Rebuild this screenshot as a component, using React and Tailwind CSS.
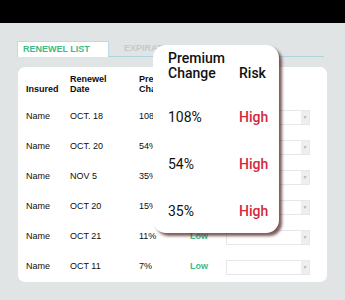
import React from "react";

const rows = [
  { name: "Name", date: "OCT. 18", change: "108%", risk: "High" },
  { name: "Name", date: "OCT. 20", change: "54%", risk: "High" },
  { name: "Name", date: "NOV 5", change: "35%", risk: "High" },
  { name: "Name", date: "OCT 20", change: "15%", risk: "Medium" },
  { name: "Name", date: "OCT 21", change: "11%", risk: "Low" },
  { name: "Name", date: "OCT 11", change: "7%", risk: "Low" },
];

const highlights = rows.filter((row) => row.risk === "High");

function RiskSelect() {
  return (
    <div className="flex h-[15px] w-[84px] border border-[#e6e7e8] bg-white">
      <div className="flex-1" />
      <div className="flex w-[8px] items-center justify-center bg-[#eeeeee] text-[5px] leading-none text-[#b3b3b3]">
        ▼
      </div>
    </div>
  );
}

export default function App() {
  return (
    <div className="relative h-[300px] w-[345px] overflow-hidden bg-[#e1e4e5] font-['Liberation_Sans',Arial,sans-serif] text-[#111]">
      <div className="h-[23px] bg-black" />

      <div className="mt-[18px] flex items-end pl-[17px] pr-[21px]">
        <div className="flex h-[16px] w-[92px] items-center border border-b-0 border-[#b9dde7] bg-white pl-[5px] text-[9px] font-bold text-[#3dbb88]">
          RENEWEL LIST
        </div>
        <div className="flex h-[16px] flex-1 items-center border-b border-[#acd3de] pl-[15px] text-[9px] font-bold text-[#c6c9cb]">
          EXPIRATION NOTIFICATION LIST
        </div>
      </div>

      <div className="mx-[18px] mt-[10px] h-[215px] rounded-[7px] bg-white pl-[8px] text-[#0d0d0d]">
        <div className="grid grid-cols-[44px_69px_51px_36px_84px] items-end pt-[7px] text-[9px] font-bold leading-[10px]">
          <div>Insured</div>
          <div>
            Renewel
            <br />
            Date
          </div>
          <div>
            Premium
            <br />
            Change
          </div>
          <div>Risk</div>
          <div />
        </div>
        <div className="mt-[8px]">
          {rows.map((row, i) => (
            <div
              key={i}
              className="grid h-[30px] grid-cols-[44px_69px_51px_36px_84px] items-center text-[9px]"
            >
              <div>{row.name}</div>
              <div>{row.date}</div>
              <div>{row.change}</div>
              <div
                className={
                  row.risk === "Low"
                    ? "font-bold text-[#3dbb88]"
                    : "font-bold text-[#d12a3a]"
                }
              >
                {row.risk}
              </div>
              <RiskSelect />
            </div>
          ))}
        </div>
      </div>

      <div className="absolute left-[153px] top-[45px] h-[188px] w-[126px] rounded-[13px] bg-white pl-[15px] pt-[6px] font-['Roboto',sans-serif] text-[14px] leading-[15px] text-[#111] shadow-[3px_3px_3px_rgba(80,35,35,0.75)]">
        <div className="grid grid-cols-[71px_1fr] items-end font-medium">
          <div>
            Premium
            <br />
            Change
          </div>
          <div>Risk</div>
        </div>
        <div className="mt-[13px]">
          {highlights.map((row, i) => (
            <div key={i} className="grid h-[47px] grid-cols-[71px_1fr] items-center">
              <div>{row.change}</div>
              <div className="font-medium text-[#d12a3a]">{row.risk}</div>
            </div>
          ))}
        </div>
      </div>
    </div>
  );
}
